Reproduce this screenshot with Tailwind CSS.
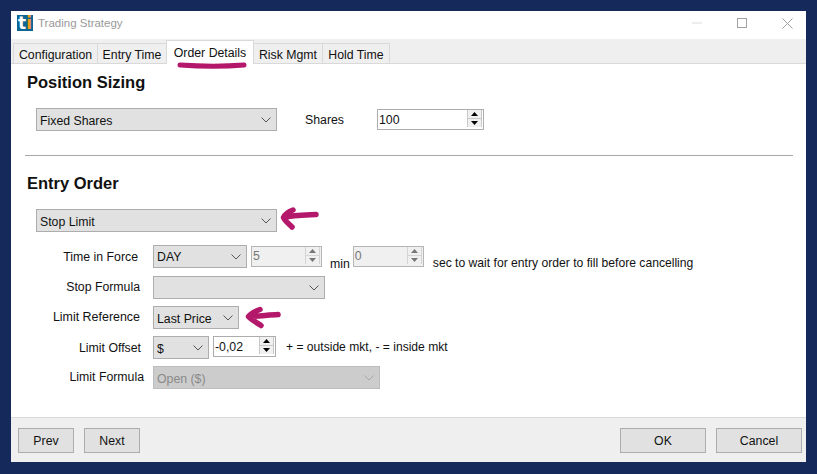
<!DOCTYPE html>
<html>
<head>
<meta charset="utf-8">
<script src="https://cdn.jsdelivr.net/npm/@tailwindcss/browser@4"></script>
</head>
<body class="m-0 w-[817px] h-[474px] overflow-hidden bg-[#15295b] p-[11px] font-['Liberation_Sans',Arial,sans-serif] text-[12.3px] text-[#111]">
<div class="w-[795px] h-[451px] flex flex-col bg-white">
  <!-- title bar -->
  <div class="h-[28px] flex items-center shrink-0 pl-[6px] pb-[4px]">
    <div class="w-[16px] h-[16px] bg-[#0b6595] flex items-center justify-center font-['DejaVu_Sans',sans-serif] font-bold text-[17px] leading-none"><span class="text-white">t</span><span class="text-[#f39a1e]">i</span></div>
    <span class="ml-[5px] mt-[2px] text-[11.5px] text-[#9a9a9a]">Trading Strategy</span>
    <div class="ml-auto flex items-center">
      <svg class="w-[12px] h-[12px]" viewBox="0 0 12 12"><path d="M1 6H11" stroke="#dcdcdc" stroke-width="1"/></svg>
      <svg class="ml-[33px] w-[12px] h-[12px]" viewBox="0 0 12 12"><rect x="1.5" y="1.5" width="9" height="9" fill="none" stroke="#a0a0a0" stroke-width="1"/></svg>
      <svg class="ml-[34px] mr-[13px] w-[11px] h-[11px]" viewBox="0 0 11 11"><path d="M.5 .5L10.5 10.5M10.5 .5L.5 10.5" stroke="#a0a0a0" stroke-width="1"/></svg>
    </div>
  </div>
  <!-- tabs -->
  <div class="relative h-[25px] shrink-0 bg-[#efefef] border-b border-[#d9d9d9] flex items-end pl-[2px]">
    <div class="h-[21px] w-[85px] -mb-px bg-[#efefef] border border-[#d9d9d9] flex items-center justify-center pt-[3px]">Configuration</div>
    <div class="h-[21px] w-[70px] -mb-px -ml-px bg-[#efefef] border border-[#d9d9d9] flex items-center justify-center pt-[3px]">Entry Time</div>
    <div class="relative z-10 h-[24px] w-[88px] -mb-px -ml-px bg-white border border-b-0 border-[#d9d9d9] flex items-start justify-center pt-[3px]">Order Details
      <svg class="absolute left-[10px] top-[20px] w-[71px] h-[9px]" viewBox="0 0 71 9"><path d="M3 4C25 5.5 48 5.5 67 4" fill="none" stroke="#b4186b" stroke-width="5" stroke-linecap="round"/></svg>
    </div>
    <div class="h-[21px] w-[70px] -mb-px -ml-px bg-[#efefef] border border-[#d9d9d9] flex items-center justify-center pt-[3px]">Risk Mgmt</div>
    <div class="h-[21px] w-[68px] -mb-px -ml-px bg-[#efefef] border border-[#d9d9d9] flex items-center justify-center pt-[3px]">Hold Time</div>
  </div>
  <!-- content -->
  <div class="flex-1 flex flex-col bg-white">
    <h2 class="ml-[16px] mt-[9px] h-[18px] leading-[18px] font-bold text-[16.5px] text-[#111]">Position Sizing</h2>
    <div class="mt-[17px] ml-[25px] h-[23px] flex items-center">
      <div class="w-[241px] h-[23px] flex items-center justify-between bg-[#e1e1e1] border border-[#adadad] pl-[3px] pr-[5px]"><span class="mt-[3px]">Fixed Shares</span><svg class="w-[10px] h-[6px]" viewBox="0 0 10 6"><path d="M.5 .5L5 5L9.5 .5" fill="none" stroke="#555" stroke-width="1"/></svg></div>
      <span class="ml-[28px] mt-[2px]">Shares</span>
      <div class="ml-[33px] w-[107px] h-[21px] flex items-start justify-between bg-white border-[1.5px] border-[#adadad] pl-[1px] pr-px"><span class="leading-[21px]">100</span>
        <div class="w-[15px] h-[17px] flex flex-col gap-px bg-[#c8c8c8] px-px">
          <div class="flex-1 bg-[#f0f0f0] flex items-center justify-center"><svg class="w-[7px] h-[4px]" viewBox="0 0 7 4"><path d="M3.5 0L7 4H0Z" fill="#000"/></svg></div>
          <div class="flex-1 bg-[#f0f0f0] flex items-center justify-center"><svg class="w-[7px] h-[4px]" viewBox="0 0 7 4"><path d="M0 0H7L3.5 4Z" fill="#000"/></svg></div>
        </div>
      </div>
    </div>
    <div class="mt-[24px] ml-[14px] w-[768px] h-px bg-[#a8a8a8]"></div>
    <h2 class="ml-[16px] mt-[18px] h-[18px] leading-[18px] font-bold text-[16.5px] text-[#111]">Entry Order</h2>
    <div class="relative mt-[17px] ml-[25px] w-[241px] h-[23px]">
      <div class="w-[241px] h-[23px] flex items-center justify-between bg-[#e1e1e1] border border-[#adadad] pl-[3px] pr-[5px]"><span class="mt-[3px]">Stop Limit</span><svg class="w-[10px] h-[6px]" viewBox="0 0 10 6"><path d="M.5 .5L5 5L9.5 .5" fill="none" stroke="#555" stroke-width="1"/></svg></div>
      <svg class="absolute left-[243px] top-[-2px] w-[44px] h-[26px]" viewBox="0 0 44 26"><path d="M14 3C10 4.5 6 7 4.500 10.500C6 14 10 17 13 20M5 10.500C14 8 26 8 37 7.500" fill="none" stroke="#b4186b" stroke-width="5.5" stroke-linecap="round" stroke-linejoin="round"/></svg>
    </div>
    <!-- time in force -->
    <div class="mt-[13px] h-[23px] flex items-center">
      <div class="w-[142px] pr-[15px] text-right mt-[2px]">Time in Force</div>
      <div class="w-[94px] h-[23px] flex items-center justify-between bg-[#e1e1e1] border border-[#adadad] pl-[3px] pr-[5px]"><span class="mt-[1px]">DAY</span><svg class="w-[10px] h-[6px]" viewBox="0 0 10 6"><path d="M.5 .5L5 5L9.5 .5" fill="none" stroke="#555" stroke-width="1"/></svg></div>
      <div class="ml-[4px] w-[71px] h-[21px] flex items-start justify-between bg-[#f0f0f0] border-[1.5px] border-[#b5b5b5] pl-[1px] pr-px text-[#777]"><span class="leading-[18px]">5</span>
        <div class="w-[15px] h-[17px] flex flex-col gap-px bg-[#d4d4d4] px-px">
          <div class="flex-1 bg-[#f0f0f0] flex items-center justify-center"><svg class="w-[7px] h-[4px]" viewBox="0 0 7 4"><path d="M3.5 0L7 4H0Z" fill="#777"/></svg></div>
          <div class="flex-1 bg-[#f0f0f0] flex items-center justify-center"><svg class="w-[7px] h-[4px]" viewBox="0 0 7 4"><path d="M0 0H7L3.500 4Z" fill="#777"/></svg></div>
        </div>
      </div>
      <span class="ml-[8px] mt-[15px]">min</span>
      <div class="ml-[3px] w-[71px] h-[21px] flex items-start justify-between bg-[#f0f0f0] border-[1.5px] border-[#b5b5b5] pl-[1px] pr-px text-[#777]"><span class="leading-[18px]">0</span>
        <div class="w-[15px] h-[17px] flex flex-col gap-px bg-[#d4d4d4] px-px">
          <div class="flex-1 bg-[#f0f0f0] flex items-center justify-center"><svg class="w-[7px] h-[4px]" viewBox="0 0 7 4"><path d="M3.5 0L7 4H0Z" fill="#777"/></svg></div>
          <div class="flex-1 bg-[#f0f0f0] flex items-center justify-center"><svg class="w-[7px] h-[4px]" viewBox="0 0 7 4"><path d="M0 0H7L3.500 4Z" fill="#777"/></svg></div>
        </div>
      </div>
      <span class="ml-[9px] mt-[14px] text-[12.15px]">sec to wait for entry order to fill before cancelling</span>
    </div>
    <!-- stop formula -->
    <div class="mt-[8px] h-[23px] flex items-center">
      <div class="w-[142px] pr-[13px] text-right">Stop Formula</div>
      <div class="w-[172px] h-[23px] flex items-center justify-end bg-[#e1e1e1] border border-[#adadad] pr-[5px]"><svg class="w-[10px] h-[6px]" viewBox="0 0 10 6"><path d="M.5 .5L5 5L9.5 .5" fill="none" stroke="#555" stroke-width="1"/></svg></div>
    </div>
    <!-- limit reference -->
    <div class="mt-[7px] h-[23px] flex items-center">
      <div class="w-[142px] pr-[13px] text-right text-[12.45px]">Limit Reference</div>
      <div class="relative w-[86px] h-[23px] flex items-center justify-between bg-[#e1e1e1] border border-[#adadad] pl-[3px] pr-[5px]"><span class="mt-[3px]">Last Price</span><svg class="w-[10px] h-[6px]" viewBox="0 0 10 6"><path d="M.5 .5L5 5L9.5 .5" fill="none" stroke="#555" stroke-width="1"/></svg>
        <svg class="absolute left-[90px] top-[-1px] w-[38px] h-[24px]" viewBox="0 0 38 24"><path d="M16 3.500C12 5 7 7 4.500 10.500C8 14 13 17 17 19.500M5 10.500C15 10 25 9 34 8.500" fill="none" stroke="#b4186b" stroke-width="5.500" stroke-linecap="round" stroke-linejoin="round"/></svg>
      </div>
    </div>
    <!-- limit offset -->
    <div class="mt-[7px] h-[23px] flex items-start">
      <div class="w-[142px] pr-[12px] text-right leading-[25px]">Limit Offset</div>
      <div class="w-[56px] h-[23px] flex items-center justify-between bg-[#e1e1e1] border border-[#adadad] pl-[3px] pr-[5px]"><span class="mt-[3px]">$</span><svg class="w-[10px] h-[6px]" viewBox="0 0 10 6"><path d="M.5 .5L5 5L9.5 .5" fill="none" stroke="#555" stroke-width="1"/></svg></div>
      <div class="ml-[4px] w-[63px] h-[21px] flex items-start justify-between bg-white border-[1.5px] border-[#adadad] pl-[1px] pr-px"><span class="leading-[21px]">-0,02</span>
        <div class="w-[15px] h-[17px] flex flex-col gap-px bg-[#c8c8c8] px-px">
          <div class="flex-1 bg-[#f0f0f0] flex items-center justify-center"><svg class="w-[7px] h-[4px]" viewBox="0 0 7 4"><path d="M3.5 0L7 4H0Z" fill="#000"/></svg></div>
          <div class="flex-1 bg-[#f0f0f0] flex items-center justify-center"><svg class="w-[7px] h-[4px]" viewBox="0 0 7 4"><path d="M0 0H7L3.500 4Z" fill="#000"/></svg></div>
        </div>
      </div>
      <span class="ml-[10px] leading-[23px] text-[12.1px]">+ = outside mkt, - = inside mkt</span>
    </div>
    <!-- limit formula -->
    <div class="mt-[7px] h-[23px] flex items-center">
      <div class="w-[142px] pr-[9px] text-right">Limit Formula</div>
      <div class="w-[227px] h-[23px] flex items-center justify-between bg-[#cccccc] border border-[#bdbdbd] pl-[3px] pr-[5px] text-[#8a8a8a]"><span class="mt-[3px]">Open ($)</span><svg class="w-[10px] h-[6px]" viewBox="0 0 10 6"><path d="M.5 .5L5 5L9.5 .5" fill="none" stroke="#a8a8a8" stroke-width="1"/></svg></div>
    </div>
  </div>
  <!-- footer -->
  <div class="h-[45px] shrink-0 bg-[#efefef] border-t border-[#d9d9d9] flex items-start pt-[10px] pl-[7px] pr-[4px] gap-[10px]">
    <button class="w-[56px] h-[25px] pt-[2px] bg-[#e1e1e1] border border-[#adadad]">Prev</button>
    <button class="w-[56px] h-[25px] pt-[2px] bg-[#e1e1e1] border border-[#adadad]">Next</button>
    <button class="ml-auto w-[86px] h-[25px] pt-[2px] bg-[#e1e1e1] border border-[#adadad]">OK</button>
    <button class="w-[86px] h-[25px] pt-[2px] bg-[#e1e1e1] border border-[#adadad]">Cancel</button>
  </div>
</div>
</body>
</html>
